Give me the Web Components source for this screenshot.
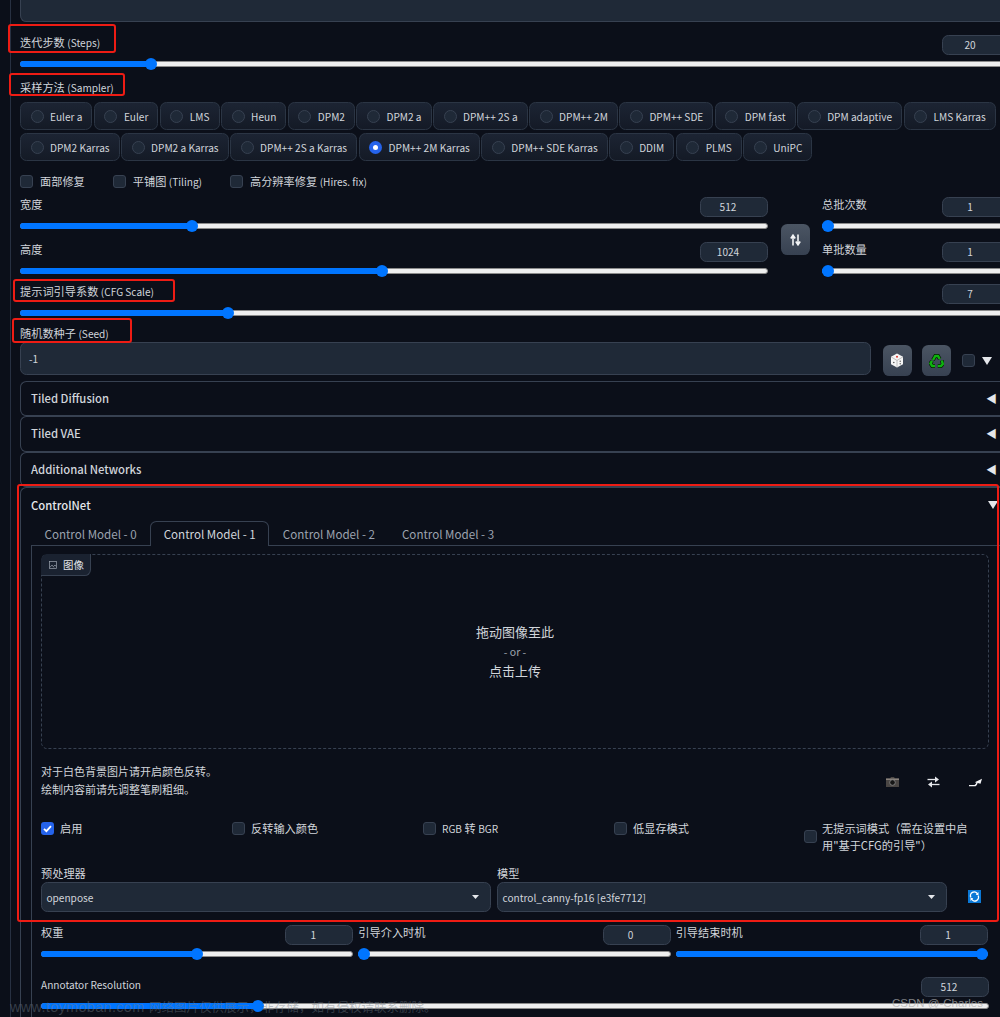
<!DOCTYPE html>
<html><head><meta charset="utf-8">
<style>
html,body{margin:0;padding:0;background:#0b0f19;height:1017px;overflow:hidden}
body{font-family:"Noto Sans CJK SC","Noto Sans",sans-serif;font-size:11.2px;color:#d1d5db}
</style></head><body>
<sd-page></sd-page>
<script>
function def(name,css,html){
  customElements.define(name,class extends HTMLElement{
    constructor(){super();this.attachShadow({mode:'open'});this._css=css;this._html=html;}
    connectedCallback(){this.shadowRoot.innerHTML='<style>'+this._css+'</style>'+(typeof this._html==='function'?this._html(this):this._html);}
  });
}
def('sd-num',`:host{display:block;box-sizing:border-box;width:68px;height:20px;flex:none;background:#1f2937;border:1px solid #374151;border-radius:6.4px;text-align:center;padding-right:12px;font-size:10.1px;line-height:18px;color:#d1d5db}`,`<slot></slot>`);
def('sd-range',`:host{display:block;position:relative;height:6px}
 .t{height:6px;box-sizing:border-box;border-radius:3px;background:#efefef;border:1px solid #8b8b8b}
 .f{position:absolute;left:0;top:0;height:6px;border-radius:3px;background:#0075ff}
 .k{position:absolute;top:-3px;width:12px;height:12px;border-radius:50%;background:#0075ff}`,
 el=>{const f=parseFloat(el.getAttribute('f')||0);const p=`calc((100% - 12px)*${f})`;
  return `<div class="t"></div><div class="f" style="width:calc(${p} + 6px)"></div><div class="k" style="left:${p}"></div>`;});
def('sd-radio',`:host{display:inline-flex;align-items:center;box-sizing:border-box;height:28px;padding:0 9px 0 9.5px;background:linear-gradient(#1c2433,#141a26);border:1px solid #2b3544;border-radius:6.4px;font-size:10.1px;color:#d1d5db;white-space:nowrap;gap:6.5px}
 i{width:13px;height:13px;border-radius:50%;box-sizing:border-box;background:#1f2937;border:1px solid #374151;flex:none}
 :host([on]) i{background:#2563eb;border:none;position:relative}
 :host([on]) i::after{content:"";position:absolute;left:4px;top:4px;width:5px;height:5px;border-radius:50%;background:#fff}`,`<i></i><slot></slot>`);
def('sd-check',`:host{display:inline-flex;align-items:center;gap:var(--g,7px);font-size:11.2px;line-height:17px;color:#d1d5db}
 i{width:13px;height:13px;border-radius:3px;box-sizing:border-box;background:#1f2937;border:1px solid #374151;flex:none;display:block}
 :host([on]) i{background:#2563eb;border:none}
 svg{display:none;width:13px;height:13px}
 :host([on]) svg{display:block}`,`<i><svg viewBox="0 0 13 13"><path d="M3 6.800l2.400 2.400L10 4.200" fill="none" stroke="#fff" stroke-width="1.800"/></svg></i><span><slot></slot></span>`);
def('sd-acc',`:host{display:flex;align-items:center;justify-content:space-between;box-sizing:border-box;height:35.5px;border:1px solid #374151;border-right:0;border-radius:6.4px 0 0 6.4px;padding:0 3px 1px 10px;font-size:11.3px;font-weight:500;color:#d1d5db}
 b{font-size:11px;font-weight:400;color:#e5e7eb}`,`<span><slot></slot></span><b>◀</b>`);
def('sd-field',`:host{display:block}
 .h{display:flex;justify-content:space-between;align-items:flex-start;height:var(--h,25.5px)}
 .l{font-size:11.2px;line-height:18px;color:#d1d5db;white-space:nowrap;margin-top:-2px}`,
 el=>`<div class="h"><span class="l"><slot name="label"></slot></span><sd-num>${el.getAttribute('n')}</sd-num></div><sd-range f="${el.getAttribute('f')}"></sd-range>`);
def('sd-mark',`:host{position:absolute;box-sizing:border-box;border:2px solid #ee1c14;border-radius:3px;pointer-events:none;z-index:5}`,``);
def('sd-tab',`:host{display:block;box-sizing:border-box;height:24.5px;padding:0 12.5px;font-size:11.6px;line-height:25px;color:#9ca3af;white-space:nowrap;border:1px solid transparent;border-bottom:0}
 :host([on]){color:#d1d5db;border-color:#374151;border-radius:6.4px 6.4px 0 0;background:#0b0f19;height:25.5px;margin-bottom:-1px}`,`<slot></slot>`);
def('sd-tool',`:host{display:flex;align-items:center;justify-content:center;box-sizing:border-box;width:29px;height:31px;border-radius:6.4px;background:linear-gradient(#4b5563,#374151);flex:none}`,`<slot></slot>`);
def('sd-select',`:host{display:flex;align-items:center;justify-content:space-between;box-sizing:border-box;height:30px;background:#1f2937;border:1px solid #374151;border-radius:6.4px;padding:0 11px 0 4.5px;font-size:10.1px;color:#d1d5db}
 svg{width:7px;height:4px}`,`<span><slot></slot></span><svg viewBox="0 0 7 4"><path d="M0 0h7L3.500 4z" fill="#e5e7eb"/></svg>`);

def('sd-page',`:host{display:block;position:relative;width:1000px;height:1017px;overflow:hidden;background:#0b0f19}
 .la{font-size:10.1px;line-height:0}
 .wrap{box-sizing:border-box;margin-left:10px;border-left:1px solid #273041;padding-left:9px;width:1010px;height:1017px}
 .prompt{height:22px;background:#1f2937;border:1px solid #374151;border-top:0;border-radius:0 0 6.4px 6.4px;box-sizing:border-box;width:1000px}
 .lbl{font-size:11.2px;line-height:18px}
 .radios{display:flex;flex-direction:column;gap:3px;margin-top:6px}
 .rrow{display:flex;gap:1.500px}
 .checks{display:flex;gap:28px;margin-top:12px;height:16px;align-items:center}
 .dims{display:flex;margin-top:8px;width:990px}
 .col{display:flex;flex-direction:column;gap:13.500px}
 .dimL{width:748px}
 .swap{width:54px;padding:27px 0 0 13px;box-sizing:border-box}
 .dimR{width:188px}
 .seed{display:flex;align-items:flex-start;height:33px}
 .seedbox{box-sizing:border-box;width:851px;height:33px;background:#1f2937;border:1px solid #374151;border-radius:6.4px;font-size:10.1px;line-height:31px;padding-left:8px;margin-right:11.500px}
 .seed sd-tool{margin:3px 11px 0 0}
 .accs{margin-top:5.500px;width:980px}
 .cn{border:1px solid #374151;border-right:0;border-bottom:0;border-radius:6.4px 0 0 0;box-sizing:border-box;height:530px;padding:0 0 0 10px;width:980px}
 .cnh{height:32.5px;padding:1px 2px 0 0;display:flex;align-items:center;justify-content:space-between;font-size:11.3px;font-weight:500;color:#e5e7eb;box-sizing:border-box}
 .tabs{display:flex;height:24.500px;position:relative;z-index:1}
 .pane{border-top:1px solid #374151;border-left:1px solid #374151;padding:8px 0 0 9px;box-sizing:border-box;height:480px}
 .drop{position:relative;box-sizing:border-box;width:948px;height:195px;border:1px dashed #374151;border-radius:6.4px;display:flex;flex-direction:column;align-items:center;justify-content:center;padding-right:0;font-size:13px;line-height:19.5px;color:#d1d5db}
 .drop small{font-size:10.5px;color:#9ca3af;line-height:19.5px}
 .badge{position:absolute;left:-1px;top:-1px;height:21px;display:flex;align-items:center;gap:6px;padding:0 6px 0 8px;border:1px solid #374151;border-width:0 1px 1px 0;border-radius:6.4px 0 6.4px 0;background:#1a2230;font-size:10.400px;color:#e5e7eb}
 .hint{display:flex;justify-content:space-between;margin-top:13px;width:948px;font-size:11px;line-height:18px;height:36px;align-items:flex-start}
 .hicons{display:flex;gap:28.500px;padding:14px 7.500px 0 0;align-items:center}
 .opts{display:grid;grid-template-columns:191px 191px 191px 190px 1fr;margin-top:21.500px;width:948px;height:34px;align-items:start;--g:6px}
 .nopt{--g:5px;align-items:center;width:170px}
 .sel{display:flex;gap:6px;margin-top:10.500px;align-items:flex-start}
 .sel>div{width:450px}
 .sel .lbl{height:18px}
 .sel .rf{width:auto;padding:8px 0 0 15px;margin-top:18px}
 .three{display:flex;gap:5px;width:947px;margin-top:13px}
 .three sd-field{flex:1;min-width:0}
 .res{display:block;margin-top:20.500px;width:948px}
 .wm{position:absolute;white-space:nowrap;font-family:"Liberation Sans","Noto Sans CJK SC",sans-serif;z-index:6;pointer-events:none;color:#6f7a8470}
 `,`
 <div class="wrap">
  <div class="prompt"></div>
  <sd-field n="20" f="0.1275" style="margin-top:13px;width:990px"><span slot="label">迭代步数 <span class="la">(Steps)</span></span></sd-field>
  <div class="lbl" style="margin-top:11.500px">采样方法 <span class="la">(Sampler)</span></div>
  <div class="radios">
   <div class="rrow">${['Euler a','Euler','LMS','Heun','DPM2','DPM2 a','DPM++ 2S a','DPM++ 2M','DPM++ SDE','DPM fast','DPM adaptive','LMS Karras'].map(s=>`<sd-radio>${s}</sd-radio>`).join('')}</div>
   <div class="rrow">${['DPM2 Karras','DPM2 a Karras','DPM++ 2S a Karras','DPM++ 2M Karras','DPM++ SDE Karras','DDIM','PLMS','UniPC'].map(s=>`<sd-radio ${s==='DPM++ 2M Karras'?'on':''}>${s}</sd-radio>`).join('')}</div>
  </div>
  <div class="checks"><sd-check>面部修复</sd-check><sd-check>平铺图 <span class="la">(Tiling)</span></sd-check><sd-check>高分辨率修复 <span class="la">(Hires. fix)</span></sd-check></div>
  <div class="dims">
   <div class="col dimL">
    <sd-field n="512" f="0.2258"><span slot="label">宽度</span></sd-field>
    <sd-field n="1024" f="0.484"><span slot="label">高度</span></sd-field>
   </div>
   <div class="swap"><sd-tool><svg width="11" height="12" viewBox="0 0 11 12"><path d="M3 11.500V2.500M.8 4.500L3 1.200 5.200 4.500M8 .5v9M5.800 7.500L8 10.800 10.200 7.500" fill="none" stroke="#f3f4f6" stroke-width="1.600"/></svg></sd-tool></div>
   <div class="col dimR">
    <sd-field n="1" f="0"><span slot="label">总批次数</span></sd-field>
    <sd-field n="1" f="0"><span slot="label">单批数量</span></sd-field>
   </div>
  </div>
  <sd-field n="7" f="0.2069" style="margin-top:10.500px;width:990px"><span slot="label">提示词引导系数 <span class="la">(CFG Scale)</span></span></sd-field>
  <div class="lbl" style="margin-top:8.500px">随机数种子 <span class="la">(Seed)</span></div>
  <div class="seed">
   <div class="seedbox">-1</div>
   <sd-tool><svg width="14" height="15" viewBox="0 0 14 15"><path d="M7 .5l6 3.300v7.400l-6 3.300-6-3.300V3.800z" fill="#f5f5f5"/><path d="M7 7.500v7M1 3.800l6 3.700 6-3.700" stroke="#a8a8a8" stroke-width=".7" fill="none"/><circle cx="7" cy="3.700" r="1" fill="#d9342b"/><circle cx="3.800" cy="9.500" r=".8" fill="#555"/><circle cx="10.200" cy="8.200" r=".7" fill="#555"/><circle cx="10.200" cy="10.800" r=".7" fill="#555"/></svg></sd-tool>
   <sd-tool style="margin-left:-.5px"><svg width="15" height="15" viewBox="0 0 15 15"><g fill="none"><g stroke="#031a03" stroke-width="3.800"><path d="M4 7 6.300 3H9l1.700 3"/><path d="M12.800 7.500 13.800 11 12 13H8.800"/><path d="M6 13H3.200L1.500 10.500 3 7.800"/></g><g stroke="#0fb30f" stroke-width="2.500"><path d="M4 7 6.300 3H9l1.700 3"/><path d="M12.800 7.500 13.800 11 12 13H8.800"/><path d="M6 13H3.200L1.500 10.500 3 7.800"/></g></g></svg></sd-tool>
   <span style="width:13px;height:13px;box-sizing:border-box;background:#1f2937;border:1px solid #374151;border-radius:3px;margin:12px 7px 0 0"></span>
   <svg width="10" height="8" viewBox="0 0 10 8" style="margin-top:15px"><path d="M0 0h10L5 8z" fill="#e5e7eb"/></svg>
  </div>
  <div class="accs"><sd-acc>Tiled Diffusion</sd-acc><sd-acc>Tiled VAE</sd-acc><sd-acc>Additional Networks</sd-acc></div>
  <div class="cn">
   <div class="cnh"><span>ControlNet</span><svg width="10" height="8" viewBox="0 0 10 8"><path d="M0 0h10L5 8z" fill="#e5e7eb"/></svg></div>
   <div class="tabs"><sd-tab>Control Model - 0</sd-tab><sd-tab on>Control Model - 1</sd-tab><sd-tab>Control Model - 2</sd-tab><sd-tab>Control Model - 3</sd-tab></div>
   <div class="pane">
    <div class="drop">
     <div class="badge"><svg width="8" height="8" viewBox="0 0 8 8"><rect x=".4" y=".4" width="7.200" height="7.200" fill="none" stroke="#9ca3af" stroke-width=".7"/><path d="M.8 6.500 3 4l2 2.500M4.500 5.500 6 4l1.200 1.500" fill="none" stroke="#9ca3af" stroke-width=".7"/></svg>图像</div>
     <div>拖动图像至此</div><small>- or -</small><div>点击上传</div>
    </div>
    <div class="hint"><div>对于白色背景图片请开启颜色反转。<br>绘制内容前请先调整笔刷粗细。</div>
     <div class="hicons">
      <svg width="13" height="10" viewBox="0 0 13 10"><path d="M0 1.500h4L5 0h3l1 1.500h4V10H0z" fill="#4a4644"/><path d="M0 1.500h13v1.500H0z" fill="#8a827c"/><circle cx="6.500" cy="5.500" r="2.800" fill="#161616" stroke="#8d8d8d" stroke-width=".8"/></svg>
      <svg width="13" height="12" viewBox="0 0 13 12"><path d="M.5 3.500H9" fill="none" stroke="#e5e7eb" stroke-width="1.300"/><path d="M8 .5l4 3-4 3z" fill="#e5e7eb"/><path d="M12.500 8.500H4" fill="none" stroke="#e5e7eb" stroke-width="1.300"/><path d="M5 5.500l-4 3 4 3z" fill="#e5e7eb"/></svg>
      <svg width="13" height="9" viewBox="0 0 13 9"><path d="M0 7.600h5.500c1.500 0 2-1 2.700-3.400" fill="none" stroke="#f3f4f6" stroke-width="1.300"/><path d="M5.800 4.200 13 .8l-1.500 5z" fill="#f3f4f6"/></svg>
     </div></div>
    <div class="opts">
     <sd-check on>启用</sd-check><sd-check>反转输入颜色</sd-check><sd-check><span class="la">RGB</span> 转 <span class="la">BGR</span></sd-check><sd-check>低显存模式</sd-check>
     <sd-check class="nopt">无提示词模式（需在设置中启用"基于CFG的引导"）</sd-check>
    </div>
    <div class="sel">
     <div><div class="lbl">预处理器</div><sd-select>openpose</sd-select></div>
     <div><div class="lbl">模型</div><sd-select>control_canny-fp16 [e3fe7712]</sd-select></div>
     <div class="rf"><svg width="13" height="13" viewBox="0 0 13 13" style="display:block"><rect width="13" height="13" fill="#0a78d6"/><path d="M2.900 7.500A3.700 3.700 0 0 1 9.500 4M10.100 5.500A3.700 3.700 0 0 1 3.500 9" fill="none" stroke="#fff" stroke-width="1.400"/><path d="M10.500 2v3H7.700zM2.500 11V8h2.800z" fill="#fff"/></svg></div>
    </div>
    <div class="three">
     <sd-field n="1" f="0.5"><span slot="label">权重</span></sd-field>
     <sd-field n="0" f="0"><span slot="label">引导介入时机</span></sd-field>
     <sd-field n="1" f="1"><span slot="label">引导结束时机</span></sd-field>
    </div>
    <sd-field class="res" n="512" f="0.2257"><span slot="label"><span class="la">Annotator Resolution</span></span></sd-field>
   </div>
  </div>
 </div>
 <sd-mark style="left:8px;top:24px;width:108px;height:29px"></sd-mark>
 <sd-mark style="left:9px;top:73px;width:116px;height:23px"></sd-mark>
 <sd-mark style="left:13px;top:279px;width:162px;height:23px"></sd-mark>
 <sd-mark style="left:12px;top:318px;width:120px;height:25px"></sd-mark>
 <sd-mark style="left:17px;top:484px;width:982px;height:438px"></sd-mark>
 <div class="wm" style="left:10px;top:997px;font-size:14.500px;letter-spacing:.3px">www.toymoban.com <span style="font-size:12.500px;letter-spacing:0">网络图片仅供展示，非存储，如有侵权请联系删除。</span></div>
 <div class="wm" style="left:892px;top:996.500px;font-size:11.500px;color:#b0b0b0b8">CSDN @-Charles</div>
 `);
</script>
</body></html>
